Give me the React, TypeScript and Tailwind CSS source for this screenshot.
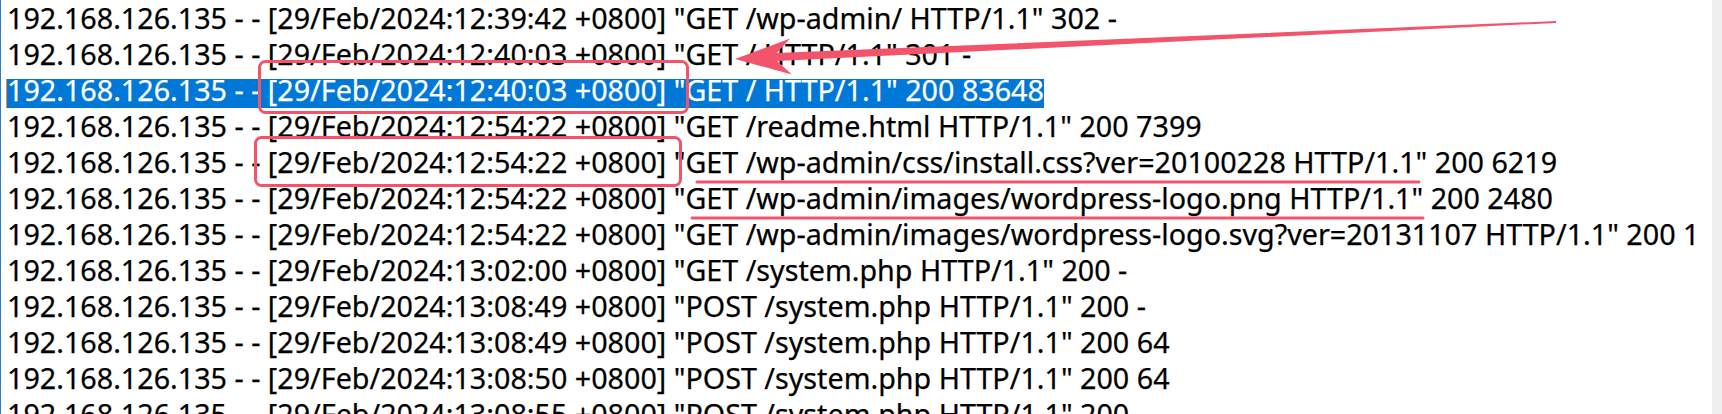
import React from "react";

const rows: string[] = [
  '192.168.126.135 - - [29/Feb/2024:12:39:42 +0800] "GET /wp-admin/ HTTP/1.1" 302 -',
  '192.168.126.135 - - [29/Feb/2024:12:40:03 +0800] "GET / HTTP/1.1" 301 -',
  '192.168.126.135 - - [29/Feb/2024:12:40:03 +0800] "GET / HTTP/1.1" 200 83648',
  '192.168.126.135 - - [29/Feb/2024:12:54:22 +0800] "GET /readme.html HTTP/1.1" 200 7399',
  '192.168.126.135 - - [29/Feb/2024:12:54:22 +0800] "GET /wp-admin/css/install.css?ver=20100228 HTTP/1.1" 200 6219',
  '192.168.126.135 - - [29/Feb/2024:12:54:22 +0800] "GET /wp-admin/images/wordpress-logo.png HTTP/1.1" 200 2480',
  '192.168.126.135 - - [29/Feb/2024:12:54:22 +0800] "GET /wp-admin/images/wordpress-logo.svg?ver=20131107 HTTP/1.1" 200 1',
  '192.168.126.135 - - [29/Feb/2024:13:02:00 +0800] "GET /system.php HTTP/1.1" 200 -',
  '192.168.126.135 - - [29/Feb/2024:13:08:49 +0800] "POST /system.php HTTP/1.1" 200 -',
  '192.168.126.135 - - [29/Feb/2024:13:08:49 +0800] "POST /system.php HTTP/1.1" 200 64',
  '192.168.126.135 - - [29/Feb/2024:13:08:50 +0800] "POST /system.php HTTP/1.1" 200 64',
  '192.168.126.135 - - [29/Feb/2024:13:08:55 +0800] "POST /system.php HTTP/1.1" 200 -',
];

function arrowPoints(x1: number, y1: number, x2: number, y2: number): string {
  const dx = x2 - x1;
  const dy = y2 - y1;
  const len = Math.hypot(dx, dy);
  const ux = dx / len;
  const uy = dy / len;
  const nx = -uy;
  const ny = ux;
  const L = 56;
  const W = 18;
  const s = 4;
  const notch = 42;
  const bx = x2 - ux * notch;
  const by = y2 - uy * notch;
  const hx = x2 - ux * L;
  const hy = y2 - uy * L;
  const pts: [number, number][] = [
    [x1 + nx * 0.9, y1 + ny * 0.9],
    [bx + nx * s, by + ny * s],
    [hx + nx * W, hy + ny * W],
    [x2, y2],
    [hx - nx * W, hy - ny * W],
    [bx - nx * s, by - ny * s],
    [x1 - nx * 0.9, y1 - ny * 0.9],
  ];
  return pts.map((p) => `${p[0].toFixed(1)},${p[1].toFixed(1)}`).join(" ");
}

export default function App() {
  const red = "#f3546b";
  return (
    <div className="relative flex h-[414px] w-[1722px] overflow-hidden bg-white">
      <div className="w-px shrink-0 bg-[#2b7bd6]" />
      <div className="flex-1 overflow-hidden pl-[6px] font-['Noto_Sans',sans-serif] text-[28.7px] text-black [-webkit-text-stroke:0.25px_currentcolor]">
        {rows.map((r, i) => (
          <div key={i} className="flex h-[36px] items-start pt-[7px]">
            {i === 2 && <span className="-ml-px h-[29px] w-px shrink-0 bg-[#ff8728]" />}
            <span
              className={
                i === 2
                  ? "h-[29px] shrink-0 whitespace-pre bg-[#0078d7] leading-[21px] text-white"
                  : "h-[29px] shrink-0 whitespace-pre leading-[21px]"
              }
            >
              {r}
            </span>
          </div>
        ))}
      </div>
      <div className="w-[10px] shrink-0 bg-[#f0f0f0]" />
      <svg
        className="pointer-events-none absolute left-0 top-0"
        width={1722}
        height={414}
        viewBox="0 0 1722 414"
      >
        <rect x={259.5} y={61.5} width={428} height={51} rx={6} fill="none" stroke={red} strokeWidth={3} />
        <rect x={255.5} y={137.5} width={425} height={48} rx={6} fill="none" stroke={red} strokeWidth={3} />
        <line x1={697} y1={182} x2={1419} y2={182} stroke={red} strokeWidth={3} strokeLinecap="round" />
        <line x1={692} y1={218} x2={1423} y2={218} stroke={red} strokeWidth={3} strokeLinecap="round" />
        <polygon points={arrowPoints(1556, 22, 735, 59)} fill={red} />
      </svg>
    </div>
  );
}
